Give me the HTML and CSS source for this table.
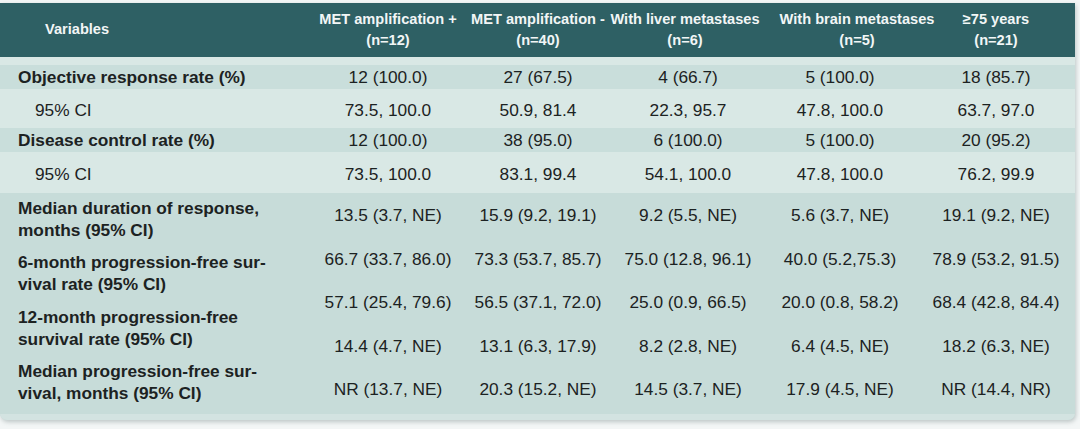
FILE: index.html
```html
<!DOCTYPE html>
<html>
<head>
<meta charset="utf-8">
<link rel="stylesheet" href="styles.css">
</head>
<body>
<div class="page">
  <div class="card">
    <div class="head cols">
      <div class="hvar">Variables</div>
      <div class="hcell">MET amplification +<br>(n=12)</div>
      <div class="hcell">MET amplification -<br>(n=40)</div>
      <div class="hcell hliver">With liver metastases<br>(n=6)</div>
      <div class="hcell hbrain">With brain metastases<br>(n=5)</div>
      <div class="hcell">≥75 years<br>(n=21)</div>
    </div>
    <div class="strip"></div>
    <div class="row cols dark r1">
      <div class="lab">Objective response rate (%)</div>
      <div class="val">12 (100.0)</div>
      <div class="val">27 (67.5)</div>
      <div class="val">4 (66.7)</div>
      <div class="val">5 (100.0)</div>
      <div class="val">18 (85.7)</div>
    </div>
    <div class="row cols light r2">
      <div class="sub">95% CI</div>
      <div class="val">73.5, 100.0</div>
      <div class="val">50.9, 81.4</div>
      <div class="val">22.3, 95.7</div>
      <div class="val">47.8, 100.0</div>
      <div class="val">63.7, 97.0</div>
    </div>
    <div class="row cols dark r3">
      <div class="lab">Disease control rate (%)</div>
      <div class="val">12 (100.0)</div>
      <div class="val">38 (95.0)</div>
      <div class="val">6 (100.0)</div>
      <div class="val">5 (100.0)</div>
      <div class="val">20 (95.2)</div>
    </div>
    <div class="row cols light r4">
      <div class="sub">95% CI</div>
      <div class="val">73.5, 100.0</div>
      <div class="val">83.1, 99.4</div>
      <div class="val">54.1, 100.0</div>
      <div class="val">47.8, 100.0</div>
      <div class="val">76.2, 99.9</div>
    </div>
    <div class="lower">
      <div class="labels">
        <div class="lab2">Median duration of response,<br>months (95% CI)</div>
        <div class="lab2">6-month progression-free sur-<br>vival rate (95% CI)</div>
        <div class="lab2">12-month progression-free<br>survival rate (95% CI)</div>
        <div class="lab2">Median progression-free sur-<br>vival, months (95% CI)</div>
      </div>
      <div class="vals">
        <div class="v">13.5 (3.7, NE)</div>
        <div class="v">15.9 (9.2, 19.1)</div>
        <div class="v">9.2 (5.5, NE)</div>
        <div class="v">5.6 (3.7, NE)</div>
        <div class="v">19.1 (9.2, NE)</div>

        <div class="v">66.7 (33.7, 86.0)</div>
        <div class="v">73.3 (53.7, 85.7)</div>
        <div class="v">75.0 (12.8, 96.1)</div>
        <div class="v">40.0 (5.2,75.3)</div>
        <div class="v">78.9 (53.2, 91.5)</div>

        <div class="v">57.1 (25.4, 79.6)</div>
        <div class="v">56.5 (37.1, 72.0)</div>
        <div class="v">25.0 (0.9, 66.5)</div>
        <div class="v">20.0 (0.8, 58.2)</div>
        <div class="v">68.4 (42.8, 84.4)</div>

        <div class="v">14.4 (4.7, NE)</div>
        <div class="v">13.1 (6.3, 17.9)</div>
        <div class="v">8.2 (2.8, NE)</div>
        <div class="v">6.4 (4.5, NE)</div>
        <div class="v">18.2 (6.3, NE)</div>

        <div class="v">NR (13.7, NE)</div>
        <div class="v">20.3 (15.2, NE)</div>
        <div class="v">14.5 (3.7, NE)</div>
        <div class="v">17.9 (4.5, NE)</div>
        <div class="v">NR (14.4, NR)</div>
      </div>
    </div>
    <div class="foot"></div>
  </div>
</div>
</body>
</html>
```

FILE: styles.css
```css
html, body {
  margin: 0;
  padding: 0;
  background: #f3f6f6;
}
body {
  font-family: "Liberation Sans", Arial, sans-serif;
  color: #1c2222;
  width: 1080px;
  height: 429px;
  overflow: hidden;
}
.page {
  padding-top: 3px;
}
.card {
  width: 1075px;
  background: #c7dcd9;
  border-radius: 0 0 7px 7px;
  box-shadow: 1px 2px 4px rgba(90, 110, 110, 0.35);
  overflow: hidden;
}
.cols {
  display: grid;
  grid-template-columns: 313px 150px 150px 150px 154px 158px;
}
.head {
  background: #2e6064;
  color: #f2f6f6;
  font-weight: bold;
  font-size: 14.6px;
  line-height: 21px;
  height: 54px;
  box-sizing: border-box;
  padding-top: 6px;
}
.hcell {
  justify-self: unsafe center;
  text-align: center;
  white-space: nowrap;
}
.hliver {
  padding-right: 6px;
}
.hbrain {
  padding-left: 34px;
}
.hvar {
  padding-left: 45px;
  padding-top: 10px;
}
.strip {
  height: 8px;
  background: #d9e8e5;
}
.row {
  font-size: 17.3px;
  line-height: 20px;
  box-sizing: border-box;
}
.dark {
  background: #c9dedb;
}
.light {
  background: #d9e8e5;
}
.r1 {
  height: 24px;
  padding-top: 2px;
}
.r2 {
  height: 39px;
  padding-top: 11px;
}
.r3 {
  height: 24px;
  padding-top: 2px;
}
.r4 {
  height: 41px;
  padding-top: 12px;
}
.lab {
  font-weight: bold;
  padding-left: 18px;
  white-space: nowrap;
}
.sub {
  padding-left: 35px;
}
.val {
  justify-self: unsafe center;
  white-space: nowrap;
}
.lower {
  display: grid;
  grid-template-columns: 313px 762px;
  background: #c7dcd9;
  font-size: 17.3px;
}
.labels {
  padding-top: 4px;
  padding-left: 18px;
}
.lab2 {
  font-weight: bold;
  line-height: 22px;
  height: 44px;
  margin-bottom: 10.3px;
  white-space: nowrap;
}
.vals {
  display: grid;
  grid-template-columns: 150px 150px 150px 154px 158px;
  grid-auto-rows: 43.5px;
  padding-top: 1px;
}
.v {
  justify-self: unsafe center;
  line-height: 43.5px;
  white-space: nowrap;
}
.foot {
  height: 6px;
  background: #d3e3e1;
}
```
